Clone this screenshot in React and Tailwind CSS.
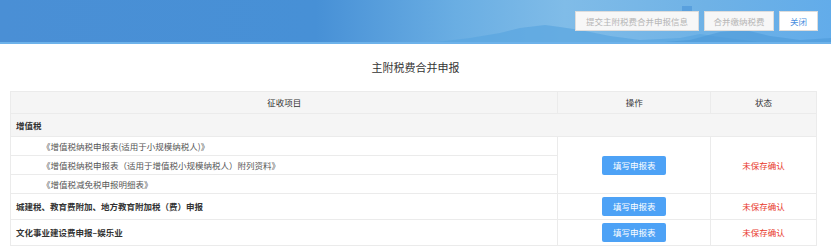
import React from 'react';

const font = { fontFamily: '"Noto Sans CJK SC", "Noto Sans", sans-serif' };

const subItems = [
  '《增值税纳税申报表(适用于小规模纳税人)》',
  '《增值税纳税申报表（适用于增值税小规模纳税人）附列资料》',
  '《增值税减免税申报明细表》',
];

const FillButton = () => (
  <button className="h-[19px] w-[64px] rounded-[2px] bg-[#4da2f6] text-[8.5px] text-white">
    填写申报表
  </button>
);

const Header = () => (
  <div className="relative h-[44px] overflow-hidden border-b-2 border-[#6db2ea] bg-[linear-gradient(90deg,#4a8fd5_0%,#4790d6_38%,#6aaee3_55%,#80bce8_68%,#6fb2e6_85%,#62acea_100%)]">
    {/* mountain silhouette */}
    <svg className="absolute inset-0" width="831" height="44" viewBox="0 0 831 44">
      <path d="M420 44 L470 38 L500 33 L520 28 L545 25 L560 27 L580 30 L610 36 L640 40 L680 38 L700 34 L720 37 L760 42 L780 44 Z" fill="#5aa5e0" opacity="0.7" />
      <path d="M640 44 L690 40 L720 32 L745 30 L770 36 L800 40 L831 38 L831 44 Z" fill="#4c9ad8" opacity="0.6" />
      <rect x="682" y="6" width="10" height="8" fill="#4a93d8" opacity="0.6" />
    </svg>
    <div className="relative flex h-full items-start justify-end gap-[5px] pr-[13px] pt-[11px]">
      <button className="h-[20px] w-[124px] border border-[#dcdcdc] bg-[#f7f7f7] text-[8.5px] text-[#b5b5b5]">
        提交主附税费合并申报信息
      </button>
      <button className="h-[20px] w-[70px] border border-[#dcdcdc] bg-[#f7f7f7] text-[8.5px] text-[#b5b5b5]">
        合并缴纳税费
      </button>
      <button className="h-[20px] w-[39px] border border-[#dcdcdc] bg-white text-[8.5px] text-[#4a8fe0]">
        关闭
      </button>
    </div>
  </div>
);

export default function App() {
  return (
    <div className="h-[250px] w-[831px] overflow-hidden bg-white" style={font}>
      <Header />
      <h1 className="pt-[15px] text-center text-[11px] leading-[16px] text-[#333]">主附税费合并申报</h1>
      <div className="px-[10px] pt-[16px]">
        <table className="w-[807px] border-collapse text-[8.5px] text-[#333]">
          <colgroup>
            <col className="w-[548px]" />
            <col className="w-[153px]" />
            <col className="w-[106px]" />
          </colgroup>
          <thead>
            <tr className="h-[22px] bg-[#f5f5f5]">
              <th className="border border-[#ebebeb] font-normal">征收项目</th>
              <th className="border border-[#ebebeb] font-normal">操作</th>
              <th className="border border-[#ebebeb] font-normal">状态</th>
            </tr>
          </thead>
          <tbody>
            <tr className="h-[23px] bg-[#f5f5f5]">
              <td colSpan={3} className="border border-[#ebebeb] pl-[5px] font-bold">增值税</td>
            </tr>
            {subItems.map((item, i) => (
              <tr key={item} className="h-[19px]">
                <td className="border border-[#ebebeb] pl-[31px] text-[#555]">{item}</td>
                {i === 0 && (
                  <>
                    <td rowSpan={3} className="border border-[#ebebeb] text-center">
                      <FillButton />
                    </td>
                    <td rowSpan={3} className="border border-[#ebebeb] text-center text-[#e8392c]">
                      未保存确认
                    </td>
                  </>
                )}
              </tr>
            ))}
            {['城建税、教育费附加、地方教育附加税（费）申报', '文化事业建设费申报–娱乐业'].map((item) => (
              <tr key={item} className="h-[26px]">
                <td className="border border-[#ebebeb] pl-[5px] font-bold">{item}</td>
                <td className="border border-[#ebebeb] text-center">
                  <FillButton />
                </td>
                <td className="border border-[#ebebeb] text-center text-[#e8392c]">未保存确认</td>
              </tr>
            ))}
          </tbody>
        </table>
      </div>
    </div>
  );
}
